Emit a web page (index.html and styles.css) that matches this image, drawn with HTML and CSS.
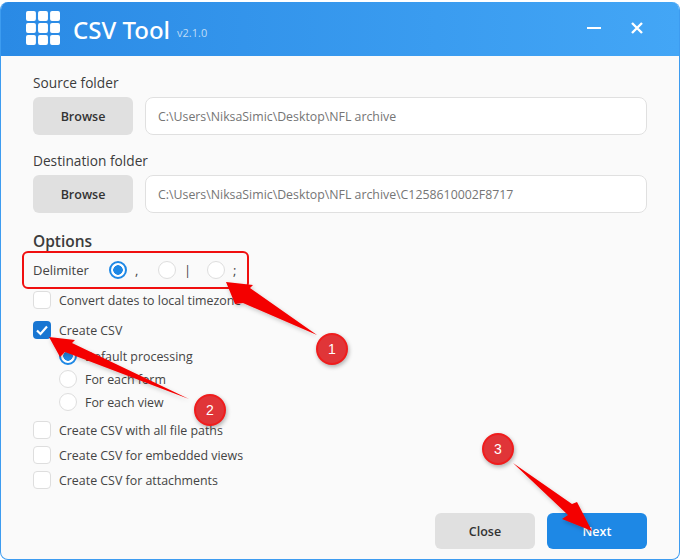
FILE: index.html
```html
<!DOCTYPE html>
<html lang="en">
<head>
<meta charset="utf-8">
<title>CSV Tool</title>
<link rel="stylesheet" href="styles.css">
</head>
<body>
<div class="window">
  <header class="titlebar">
    <svg class="logo" width="34" height="34" viewBox="0 0 36 36" aria-hidden="true">
      <g fill="#fff">
        <rect x="0" y="0" width="10.5" height="10.5" rx="2"/><rect x="12.75" y="0" width="10.5" height="10.5" rx="2"/><rect x="25.5" y="0" width="10.5" height="10.5" rx="2"/>
        <rect x="0" y="12.75" width="10.5" height="10.5" rx="2"/><rect x="12.75" y="12.75" width="10.5" height="10.5" rx="2"/><rect x="25.5" y="12.75" width="10.5" height="10.5" rx="2"/>
        <rect x="0" y="25.5" width="10.5" height="10.5" rx="2"/><rect x="12.75" y="25.5" width="10.5" height="10.5" rx="2"/><rect x="25.5" y="25.5" width="10.5" height="10.5" rx="2"/>
      </g>
    </svg>
    <span class="app-name">CSV Tool</span>
    <span class="version">v2.1.0</span>
    <span class="spacer"></span>
    <svg class="win-btn" width="14" height="14" viewBox="0 0 14 14" aria-hidden="true"><path d="M0 7H14" stroke="#fff" stroke-width="2.2"/></svg>
    <svg class="win-btn close-x" width="14" height="14" viewBox="0 0 14 14" aria-hidden="true"><path d="M2 2L12 12M12 2L2 12" stroke="#fff" stroke-width="2.4"/></svg>
  </header>
  <main class="content">
    <div class="label">Source folder</div>
    <div class="path-row">
      <button class="btn">Browse</button>
      <div class="path">C:\Users\NiksaSimic\Desktop\NFL archive</div>
    </div>
    <div class="label">Destination folder</div>
    <div class="path-row">
      <button class="btn">Browse</button>
      <div class="path">C:\Users\NiksaSimic\Desktop\NFL archive\C1258610002F8717</div>
    </div>
    <div class="options-title">Options</div>
    <div class="delimiter">
      <span class="delim-label">Delimiter</span>
      <span class="radio on"></span><span class="delim-val">,</span>
      <span class="radio"></span><span class="delim-val">|</span>
      <span class="radio"></span><span class="delim-val">;</span>
    </div>
    <div class="check-row first"><span class="check"></span>Convert dates to local timezone</div>
    <div class="check-row second">
      <span class="check on"><svg width="18" height="18" viewBox="0 0 18 18" aria-hidden="true"><path d="M4 9.5L7.5 13L14 5.5" fill="none" stroke="#fff" stroke-width="2.2"/></svg></span>Create CSV
    </div>
    <div class="sub-options">
      <div class="radio-row"><span class="radio on"></span>Default processing</div>
      <div class="radio-row"><span class="radio"></span>For each form</div>
      <div class="radio-row"><span class="radio"></span>For each view</div>
    </div>
    <div class="check-list">
      <div class="check-row"><span class="check"></span>Create CSV with all file paths</div>
      <div class="check-row"><span class="check"></span>Create CSV for embedded views</div>
      <div class="check-row"><span class="check"></span>Create CSV for attachments</div>
    </div>
    <footer class="actions">
      <button class="btn">Close</button>
      <button class="btn primary">Next</button>
    </footer>
  </main>
</div>

<div class="highlight"></div>
<svg class="arrows" width="680" height="560" viewBox="0 0 680 560" aria-hidden="true">
  <defs><filter id="sh" x="-20%" y="-20%" width="140%" height="140%"><feDropShadow dx="1" dy="2" stdDeviation="2" flood-color="#000" flood-opacity=".22"/></filter></defs>
  <g fill="#f40000" filter="url(#sh)">
    <path d="M226 282L253 285L250 288L317 335L243 303L235 304Z"/>
    <path d="M49 337L75 340L72 343L189 399L65 352L60 357Z"/>
    <path d="M513 463L572 504L577 502L592 531L562 519L568 515Z"/>
  </g>
</svg>
<span class="badge b1">1</span>
<span class="badge b2">2</span>
<span class="badge b3">3</span>
</body>
</html>
```
FILE: styles.css
```css
* { box-sizing: border-box; }
html, body { margin: 0; height: 100%; }
body {
  position: relative;
  width: 680px;
  height: 560px;
  overflow: hidden;
  background: #fff;
  padding: 2px 0 0 0;
  font-family: "Open Sans", "Noto Sans", sans-serif;
  color: #444;
}
.window {
  width: 680px;
  height: 558px;
  border: 1px solid #3d9cf0;
  border-top: 0;
  border-radius: 8px;
  overflow: hidden;
  background: #fafafa;
  display: flex;
  flex-direction: column;
}
.titlebar {
  height: 54px;
  flex: none;
  display: flex;
  align-items: center;
  padding: 0 35px 2px 25px;
  background: linear-gradient(90deg, #2a8ae5, #43a6f6);
  color: #fff;
}
.logo { flex: none; margin-right: 13px; }
.app-name { font-size: 24px; font-weight: 500; line-height: 32px; margin-top: 3px; font-family: "Noto Sans", sans-serif; }
.version { font-size: 11px; margin-left: 7px; margin-top: 9px; color: #bfdcf7; }
.spacer { flex: 1; }
.win-btn { flex: none; }
.close-x { margin-left: 29px; }
.content {
  flex: 1;
  padding: 17px 32px 0;
  display: flex;
  flex-direction: column;
}
.label { font-size: 13.7px; line-height: 20px; font-weight: 500; color: #3c3c3c; margin-bottom: 4px; }
.path-row { display: flex; gap: 12px; height: 38px; margin-bottom: 16px; }
.btn {
  width: 100px;
  flex: none;
  border: 0;
  border-radius: 6px;
  background: #e0e0e0;
  color: #333;
  font: 600 12.5px "Open Sans", "Noto Sans", sans-serif;
}
.path {
  flex: 1;
  background: #fff;
  border: 1px solid #e0e0e0;
  border-radius: 8px;
  padding: 0 12px;
  display: flex;
  align-items: center;
  font-size: 12.33px;
  color: #757575;
}
.options-title { font-size: 15.5px; line-height: 20px; font-weight: 600; color: #3c3c3c; margin-top: 2px; }
.delimiter { display: flex; align-items: center; height: 24px; margin-top: 7px; font-size: 13px; }
.delim-label { width: 76px; }
.delim-val { width: 31px; padding-left: 8px; font-size: 13px; }
.radio {
  width: 18px;
  height: 18px;
  flex: none;
  border-radius: 50%;
  background: #fff;
  border: 1px solid #dedede;
}
.radio.on { border: 2px solid #1e88e5; background: radial-gradient(circle, #1e88e5 0 4.5px, #fff 5px); }
.check-row { display: flex; align-items: center; gap: 8px; font-size: 12.4px; height: 18px; }
.check-row.first { margin-top: 9px; }
.check-row.second { margin-top: 12px; }
.check {
  width: 18px;
  height: 18px;
  flex: none;
  background: #fff;
  border: 1px solid #dedede;
  border-radius: 4px;
  display: block;
}
.check.on { background: #1976d2; border: 0; }
.check svg { display: block; }
.sub-options { display: flex; flex-direction: column; gap: 5px; padding-left: 26px; margin-top: 8px; }
.radio-row { display: flex; align-items: center; gap: 8px; font-size: 12.4px; height: 18px; }
.check-list { display: flex; flex-direction: column; gap: 7px; margin-top: 10px; }
.actions { margin-top: auto; margin-bottom: 10px; display: flex; justify-content: flex-end; gap: 12px; }
.actions .btn { height: 36px; }
.btn.primary { background: #1e88e5; color: #fff; }
.highlight {
  position: absolute;
  left: 22px;
  top: 251px;
  width: 227px;
  height: 38px;
  border: 2px solid #f01010;
  border-radius: 6px;
}
.arrows { position: absolute; left: 0; top: 0; }
.badge {
  position: absolute;
  width: 32px;
  height: 32px;
  border-radius: 50%;
  border: 2px solid #f01c1c;
  background: #e03538;
  color: #fff;
  font: 14px/28px "Liberation Sans", sans-serif;
  text-align: center;
  box-shadow: 1px 2px 4px rgba(0,0,0,.3);
}
.b1 { left: 316px; top: 333px; }
.b2 { left: 194px; top: 394px; }
.b3 { left: 482px; top: 433px; }
```
